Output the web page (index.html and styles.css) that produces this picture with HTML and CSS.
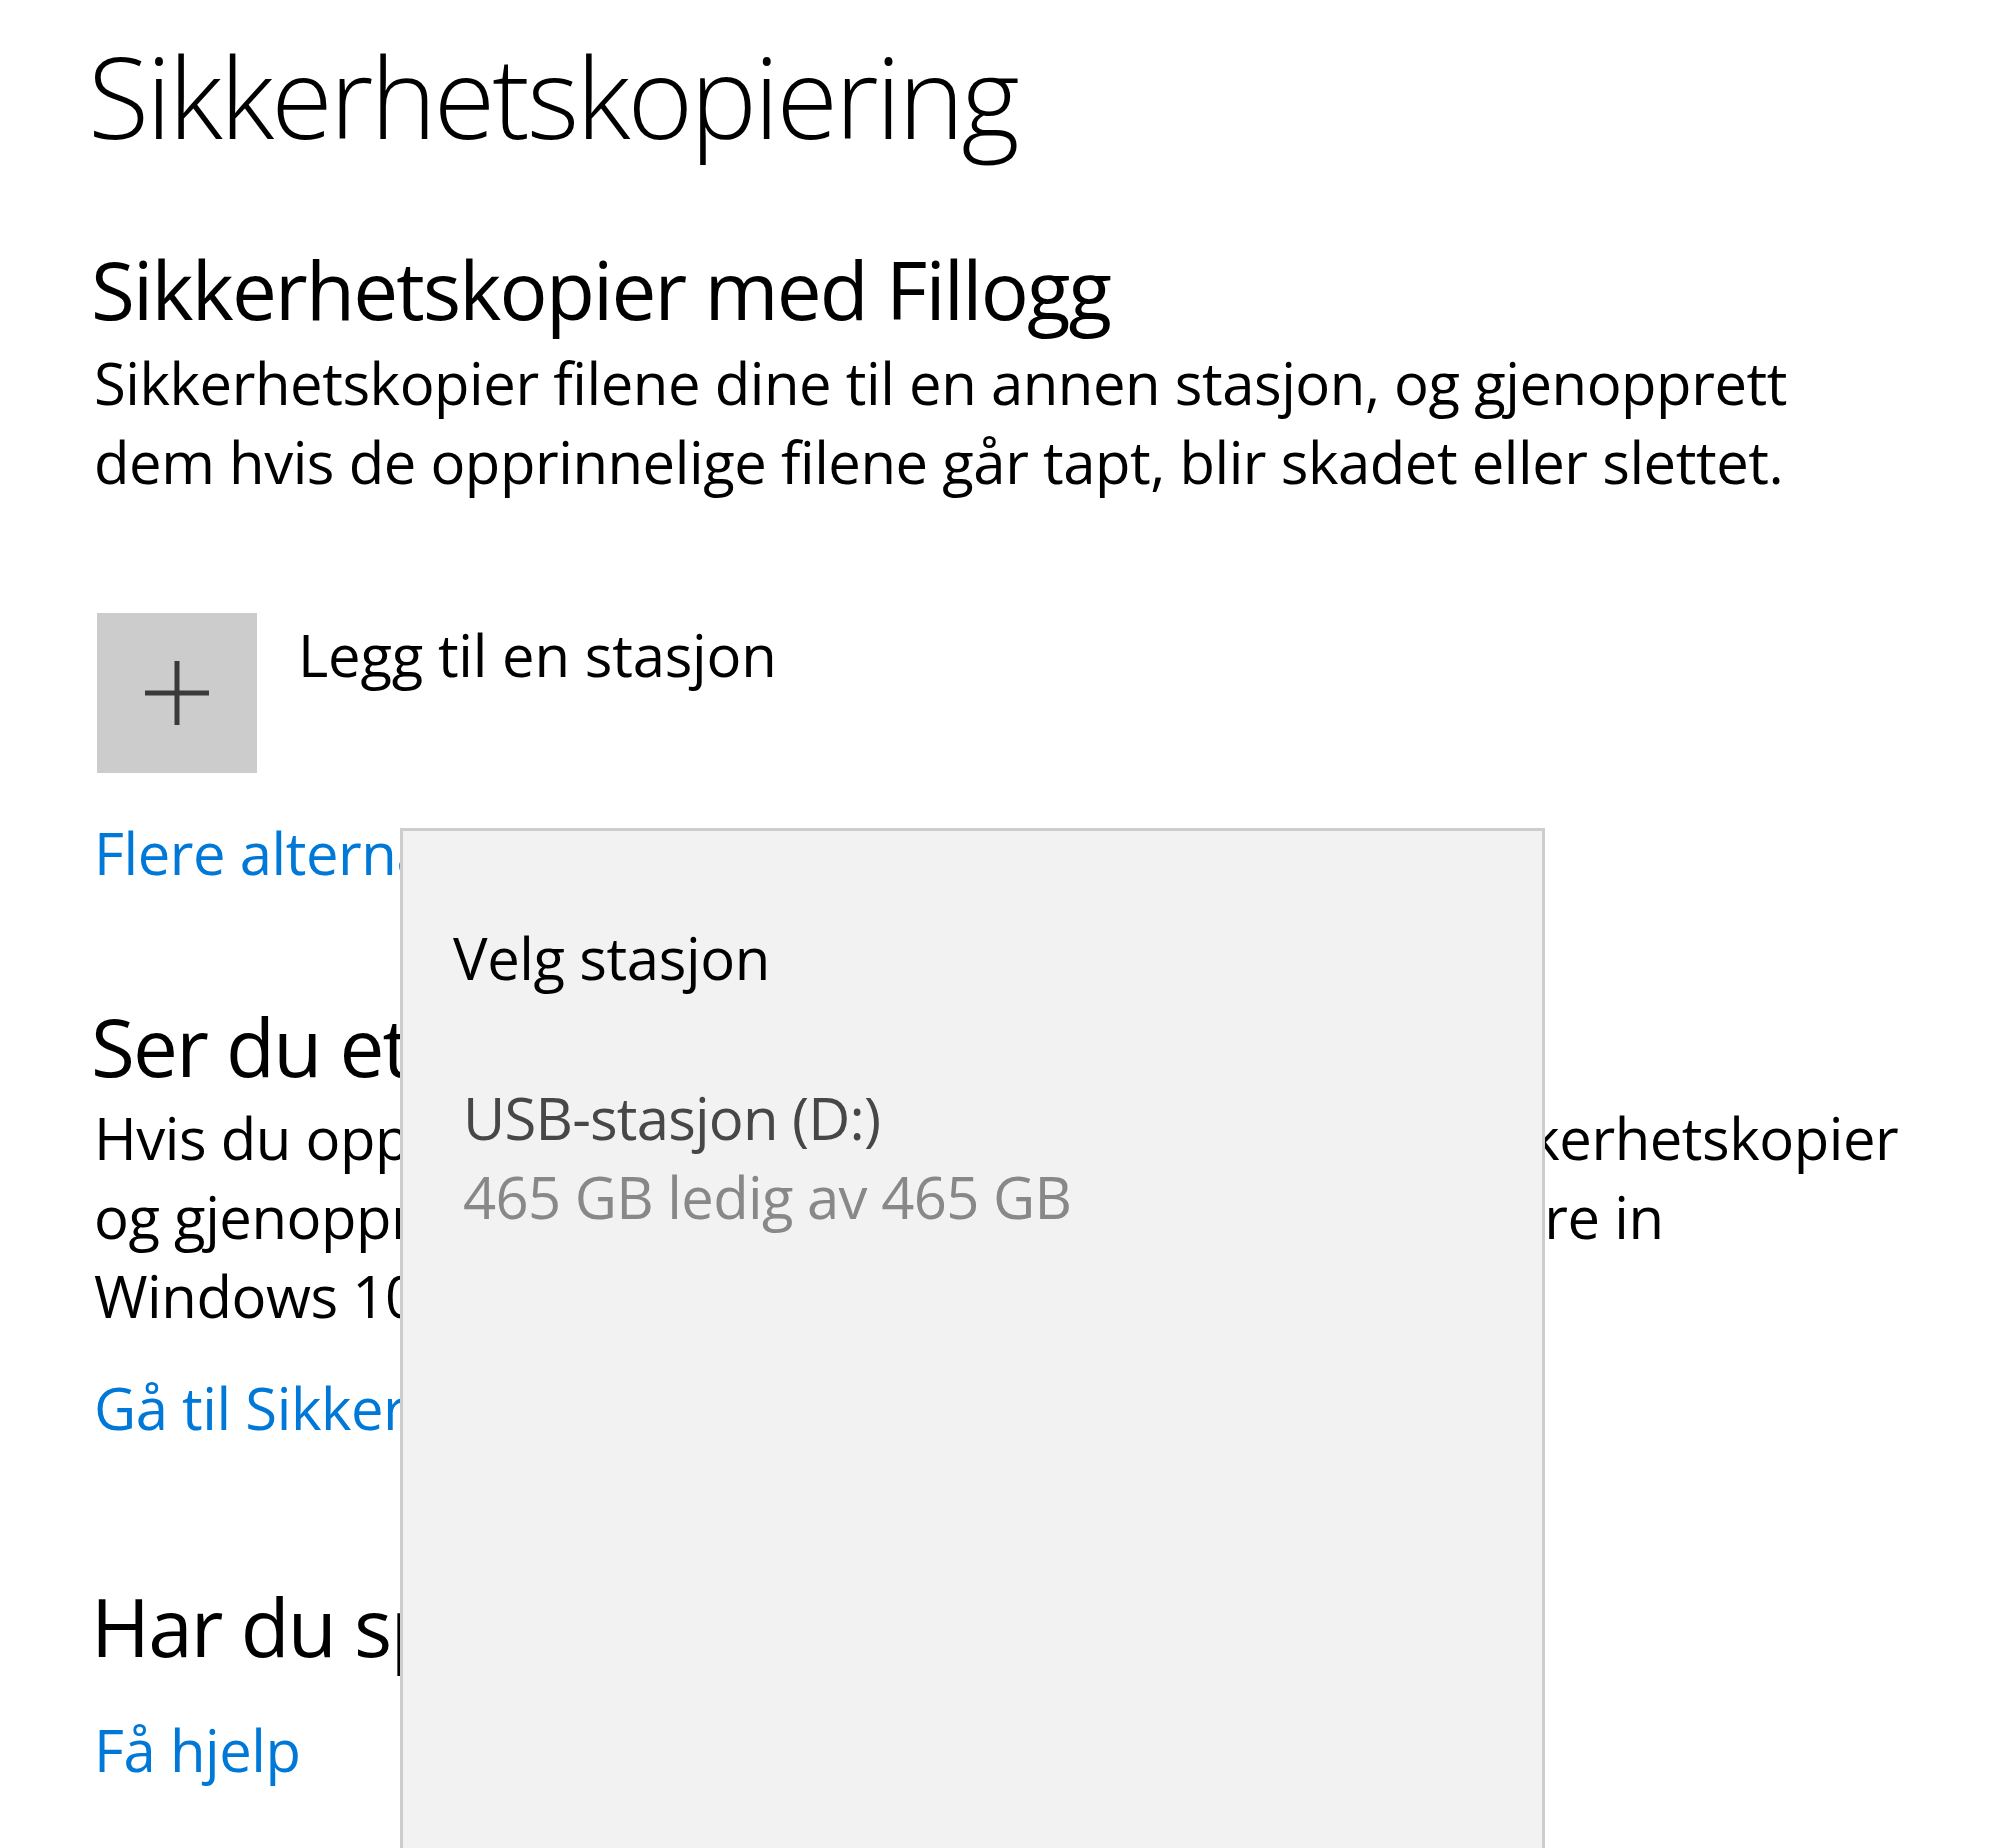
FILE: index.html
```html
<!DOCTYPE html>
<html>
<head>
  <title>Sikkerhetskopiering</title>
  <link rel="stylesheet" href="styles.css">
</head>
<body>
  <div class="page">
    <h1 class="title">Sikkerhetskopiering</h1>

    <h2 class="subtitle first">Sikkerhetskopier med Fillogg</h2>
    <p class="text">Sikkerhetskopier filene dine til en annen stasjon, og gjenopprett<br>dem hvis de opprinnelige filene går tapt, blir skadet eller slettet.</p>

    <div class="add-drive">
      <div class="add-icon">
        <svg width="64" height="64" viewBox="0 0 64 64">
          <path d="M32 0V64M0 32H64" stroke="#3a3a3a" stroke-width="5" fill="none"/>
        </svg>
      </div>
      <span class="add-label">Legg til en stasjon</span>
    </div>
    <a href="#" class="link more">Flere alternativer</a>

    <h2 class="subtitle older">Ser du etter en eldre sikkerhetskopi?</h2>
    <p class="text">Hvis du opprettet en sikkerhetskopi med verktøyet Sikkerhetskopier<br>og gjenoppretting (Windows 7), vil det fremdeles fungere in<br>Windows 10.</p>
    <a href="#" class="link restore">Gå til Sikkerhetskopiering og gjenoppretting (Windows 7)</a>

    <h2 class="subtitle help">Har du spørsmål?</h2>
    <a href="#" class="link get-help">Få hjelp</a>

    <!-- drive picker flyout -->
    <div class="flyout">
      <div class="flyout-title">Velg stasjon</div>
      <div class="drive">
        <div class="drive-name">USB-stasjon (D:)</div>
        <div class="drive-size">465 GB ledig av 465 GB</div>
      </div>
    </div>
  </div>
</body>
</html>
```

FILE: styles.css
```css
html, body {
  margin: 0;
  padding: 0;
  background: #fff;
  overflow: hidden;
}
body {
  font-family: "Open Sans", "Noto Sans", sans-serif;
  color: #000;
}
.page {
  position: relative;
  height: 1848px;
  padding: 26px 0 0 94px;
  box-sizing: border-box;
}
.title {
  margin: 0 0 0 -6px;
  font-size: 112px;
  font-weight: 300;
  line-height: 140px;
  letter-spacing: -2.9px;
}
.subtitle {
  margin: 0 0 0 -3px;
  font-size: 80px;
  font-weight: 400;
  line-height: 100px;
  letter-spacing: -1.8px;
  white-space: nowrap;
}
.subtitle.first {
  margin-top: 73px;
}
.subtitle.older {
  margin-top: 104px;
}
.subtitle.help {
  margin-top: 129px;
}
.text {
  margin: 4px 0 0 0;
  font-size: 58px;
  line-height: 79px;
  letter-spacing: -0.45px;
  white-space: nowrap;
}
.subtitle.older + .text {
  margin-top: 2px;
}
.add-drive {
  display: flex;
  align-items: flex-start;
  margin: 112px 0 0 3px;
}
.add-icon {
  width: 160px;
  height: 160px;
  background: #cccccc;
  display: flex;
  align-items: center;
  justify-content: center;
}
.add-label {
  margin: 2px 0 0 41px;
  font-size: 58px;
  line-height: 79px;
  letter-spacing: -0.2px;
}
.link {
  display: block;
  font-size: 58px;
  line-height: 79px;
  letter-spacing: -0.45px;
  color: #0078d7;
  text-decoration: none;
  white-space: nowrap;
}
.link.more {
  margin-top: 40px;
}
.link.restore {
  margin-top: 33px;
  width: 1400px;
  overflow: hidden;
}
.link.get-help {
  margin-top: 34px;
}

/* flyout */
.flyout {
  position: absolute;
  top: 828px;
  left: 400px;
  bottom: 0;
  width: 1145px;
  box-sizing: border-box;
  background: #f2f2f2;
  border: 3px solid #cdcdcd;
  border-bottom: none;
  padding: 87px 0 0 50px;
}
.flyout-title {
  font-size: 58px;
  line-height: 79px;
  letter-spacing: -0.4px;
}
.drive {
  margin: 81px 0 0 10px;
}
.drive-name {
  font-size: 58px;
  line-height: 79px;
  letter-spacing: -0.8px;
  color: #474747;
}
.drive-size {
  font-size: 58px;
  line-height: 79px;
  letter-spacing: -0.7px;
  color: #888888;
}
```
